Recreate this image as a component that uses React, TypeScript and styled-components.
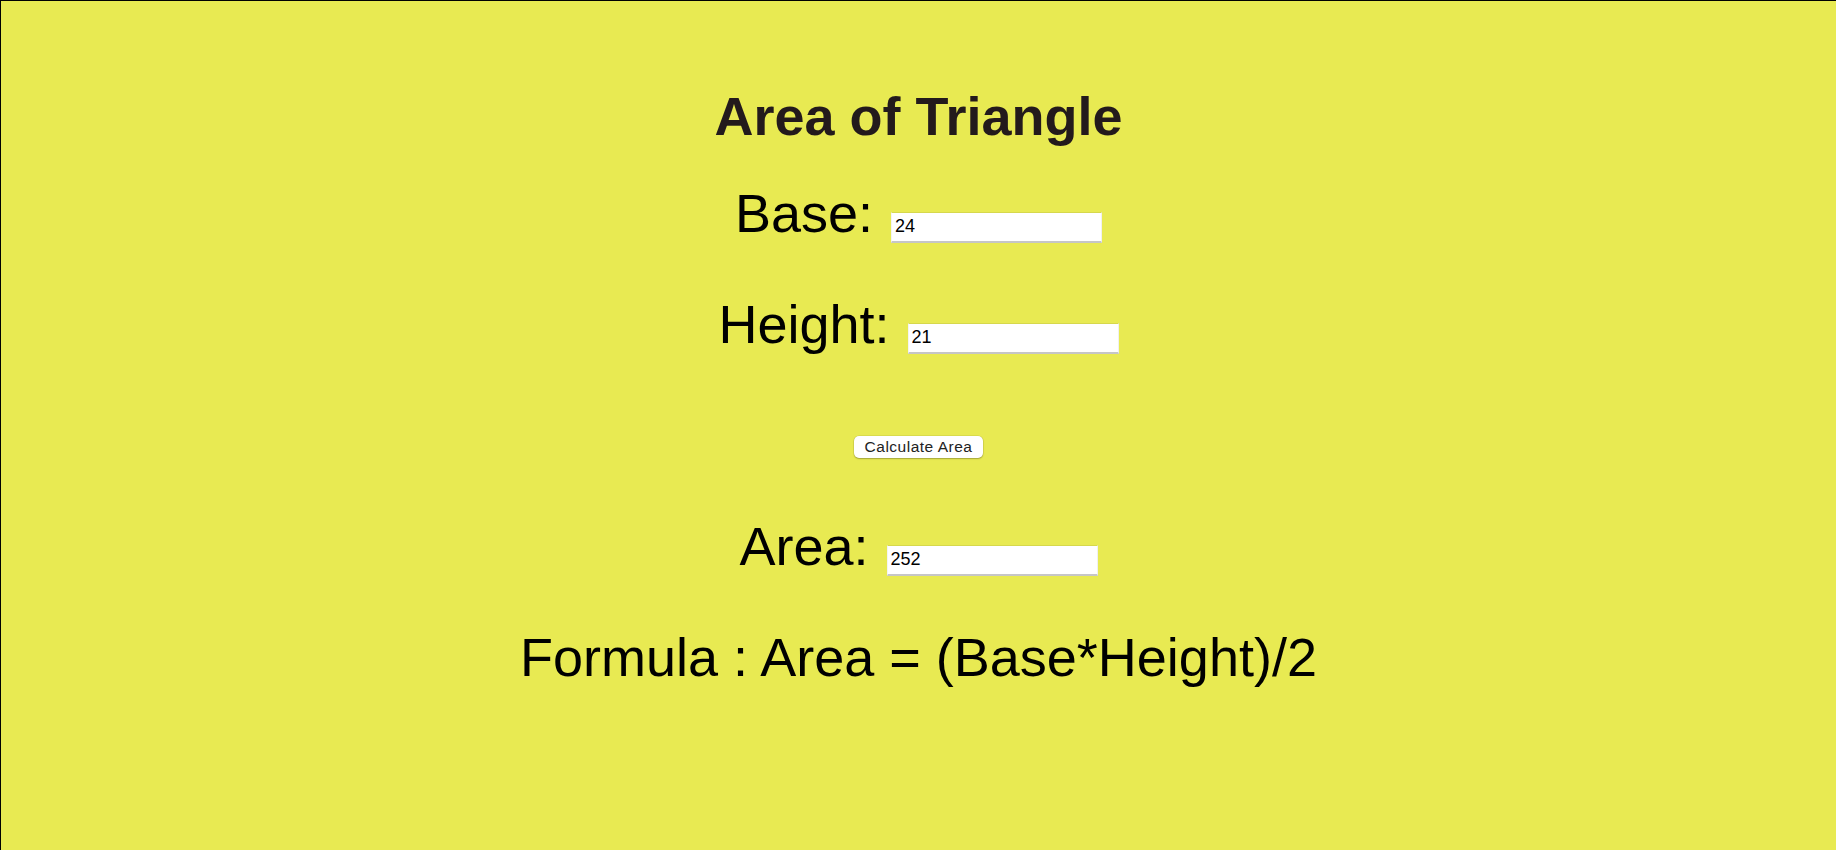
import React, { useState } from "react";
import styled, { createGlobalStyle } from "styled-components";

const GlobalStyle = createGlobalStyle`
  html, body {
    margin: 0;
    padding: 0;
    background: #e8ea52;
  }
  body {
    font-family: "Liberation Sans", Arial, sans-serif;
  }
`;

const Page = styled.div`
  box-sizing: border-box;
  min-height: 100vh;
  background: #e8ea52;
  border-top: 1px solid #000;
  border-left: 1px solid #000;
  display: flex;
  flex-direction: column;
  align-items: center;
  padding-top: 84px;
`;

const Title = styled.h1`
  margin: 0;
  font-family: "Liberation Sans", Arial, sans-serif;
  font-weight: 700;
  font-size: 54px;
  line-height: 62px;
  color: #231a1c;
`;

const Row = styled.div<{ $top: number }>`
  display: flex;
  align-items: baseline;
  gap: 18px;
  margin-top: ${(p) => p.$top}px;
  height: 62px;
`;

const Label = styled.label`
  font-family: "Liberation Sans", Arial, sans-serif;
  font-size: 54px;
  line-height: 62px;
  color: #000;
`;

const Field = styled.input`
  box-sizing: border-box;
  width: 211px;
  height: 31px;
  padding: 0 3px;
  margin: 0;
  font-family: "Liberation Sans", Arial, sans-serif;
  font-size: 18px;
  color: #000;
  background: #fff;
  border: none;
  border-top: 1px solid #d6d84c;
  border-bottom: 2px solid #c6c6c6;
  border-left: 1px solid #f4f4f4;
  border-right: 1px solid #f0f0f0;
  outline: none;
`;

const Button = styled.button`
  box-sizing: border-box;
  margin-top: 81px;
  width: 129px;
  height: 22px;
  padding: 0;
  font-family: "Liberation Sans", Arial, sans-serif;
  font-size: 15.5px;
  letter-spacing: 0.5px;
  color: #222;
  background: #fff;
  border: none;
  border-radius: 5px;
  box-shadow: 0 0 0 0.5px rgba(0, 0, 0, 0.12), 0 1px 1.5px rgba(0, 0, 0, 0.25);
  cursor: pointer;
`;

const Formula = styled.p`
  margin: 49px 0 0;
  font-family: "Liberation Sans", Arial, sans-serif;
  font-size: 54px;
  line-height: 62px;
  color: #000;
`;

export default function App() {
  const [base, setBase] = useState("24");
  const [height, setHeight] = useState("21");
  const [area, setArea] = useState("252");

  const calc = () => {
    const b = parseFloat(base);
    const h = parseFloat(height);
    if (!isNaN(b) && !isNaN(h)) setArea(String((b * h) / 2));
  };

  return (
    <>
      <GlobalStyle />
      <Page>
        <Title>Area of Triangle</Title>
        <Row $top={35}>
          <Label htmlFor="base">Base:</Label>
          <Field id="base" value={base} onChange={(e) => setBase(e.target.value)} />
        </Row>
        <Row $top={49}>
          <Label htmlFor="height">Height:</Label>
          <Field id="height" value={height} onChange={(e) => setHeight(e.target.value)} />
        </Row>
        <Button onClick={calc}>Calculate Area</Button>
        <Row $top={57}>
          <Label htmlFor="area">Area:</Label>
          <Field id="area" value={area} readOnly />
        </Row>
        <Formula>Formula : Area = (Base*Height)/2</Formula>
      </Page>
    </>
  );
}
